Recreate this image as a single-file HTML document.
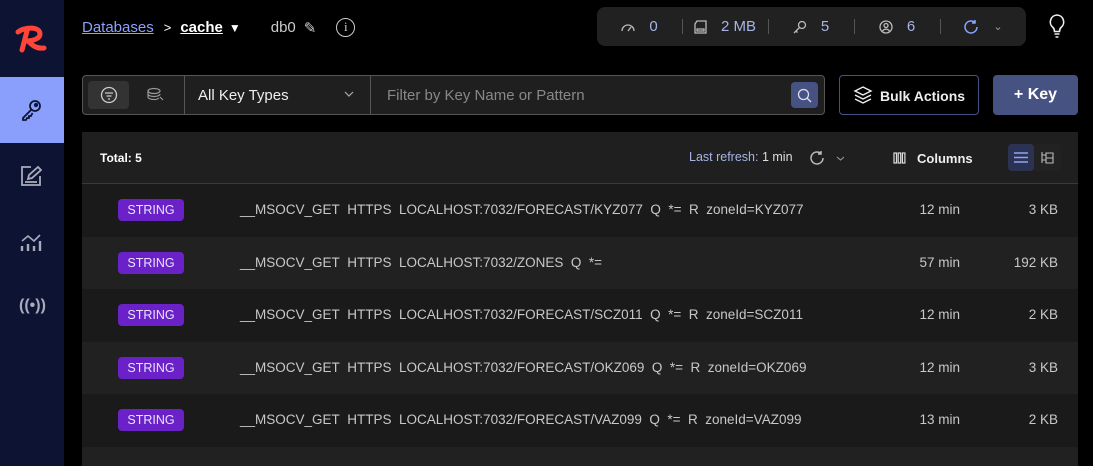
<!DOCTYPE html>
<html><head><meta charset="utf-8"><style>
*{box-sizing:border-box;margin:0;padding:0}
html,body{width:1093px;height:466px;overflow:hidden}
body{background:#000;font-family:"Liberation Sans",sans-serif;color:#ddd;position:relative}
.sb{position:absolute;left:0;top:0;width:64px;height:466px;background:#0d1433}
.act{position:absolute;left:0;top:77px;width:64px;height:66px;background:#8a9ffc}
.ab{position:absolute}
.crumb{position:absolute;top:18px;left:82px;font-size:15px;display:flex;align-items:center}
.stats{position:absolute;left:597px;top:7px;width:429px;height:39px;background:#212121;border-radius:8px;display:flex;align-items:center;font-size:15px;color:#a7b4e8}
.stats .c{display:flex;align-items:center;justify-content:center;gap:14px;height:100%;position:relative}
.stats .c+.c:before{content:"";position:absolute;left:0;top:12px;height:15px;border-left:1px solid #555}
.bar{position:absolute;left:82px;top:75px;width:743px;height:40px;border:1px solid #555;border-radius:4px;background:#1f1f1f;display:flex}
.panel{position:absolute;left:82px;top:132px;width:996px;height:334px;background:#212121;overflow:hidden}
.hdr{height:52px;border-bottom:1px solid #3a3a3a;background:#1f1f1f;position:relative;font-size:13px}
.row{height:52.5px;position:relative;font-size:13.5px;color:#c8c8c8;background:#1a1a1a}
.row:nth-child(odd){background:#212121}
.tag{position:absolute;left:36px;top:15px;width:66px;height:22px;background:#6b21c8;border-radius:4px;color:#e9e2ff;font-size:12.5px;text-align:center;line-height:22px}
.nm{position:absolute;left:158px;top:18px}
.tm{position:absolute;right:118px;top:18px}
.sz{position:absolute;right:20px;top:18px}
</style></head><body>
<div class="sb">
<svg class="ab" style="left:14px;top:24px" width="36" height="30" viewBox="0 0 36 30" fill="none" stroke="#ff4438" stroke-width="5" stroke-linecap="round" stroke-linejoin="round"><path d="M4 8c6-5 22-6 22 2 0 5-8 7-13 7M13 7L8 26M14 17c4 4 8 8 16 7"/></svg>
<div class="act"></div>
<svg class="ab" style="left:20px;top:98px" width="24" height="24" viewBox="0 0 24 24" fill="none" stroke="#0d1433" stroke-width="1.8"><circle cx="15" cy="8" r="5"/><path d="M11 12 L3 20 L3 22 L6 22 L7 20 L9 20 L9 18 L11 18 L12.5 15"/><circle cx="16" cy="7" r="1.2"/></svg>
<svg class="ab" style="left:20px;top:165px" width="22" height="22" viewBox="0 0 22 22" fill="none" stroke="#aab" stroke-width="1.8"><path d="M11 2H2v18h18V11"/><path d="M8 14l1-4 9-8 3 3-9 8z"/><path d="M5 17h12"/></svg>
<svg class="ab" style="left:20px;top:232px" width="22" height="20" viewBox="0 0 22 20" fill="none" stroke="#aab" stroke-width="2.4"><path d="M2 14v5M8 12v7M14 14v5M20 9v10"/><path d="M2 9l6-5 6 5 6-6" stroke-width="1.6"/></svg>
<div style="position:absolute;left:19px;top:297px;color:#aab;font-size:16px;font-weight:bold">((•))</div>
</div>
<div class="crumb"><span style="color:#8ba2ff;text-decoration:underline">Databases</span><span style="margin:0 9px 0 10px;color:#fff;font-size:13px">&gt;</span><span style="color:#fff;font-weight:bold;text-decoration:underline">cache</span><span style="color:#fff;margin-left:6px;font-size:12px">▼</span><span style="margin-left:30px;color:#ccc">db0</span><span style="margin-left:8px;color:#ccc">✎</span><span style="margin-left:20px;display:inline-block;width:19px;height:19px;border:1.6px solid #ccc;border-radius:50%;text-align:center;font-size:13px;line-height:16px;color:#ccc;font-family:'Liberation Serif'">i</span></div>
<div class="stats">
<div class="c" style="width:85px"><svg width="14" height="10" viewBox="0 0 14 10" fill="none" stroke="#bbb" stroke-width="1.3"><path d="M1 9a6 6 0 0 1 12 0M7 9l3-4"/></svg><span>0</span></div>
<div class="c" style="width:86px"><svg width="13" height="14" viewBox="0 0 13 14" fill="none" stroke="#bbb" stroke-width="1.3"><path d="M3 1h9v12H1V4z M3 9h7v2H3z"/></svg><span>2 MB</span></div>
<div class="c" style="width:86px"><svg width="14" height="14" viewBox="0 0 14 14" fill="none" stroke="#bbb" stroke-width="1.3"><circle cx="9" cy="5" r="3.5"/><path d="M6.5 7.5L1 13M3 11l1.5 1.5"/></svg><span>5</span></div>
<div class="c" style="width:86px"><svg width="14" height="14" viewBox="0 0 14 14" fill="none" stroke="#bbb" stroke-width="1.3"><circle cx="7" cy="7" r="6"/><circle cx="7" cy="5.5" r="2"/><path d="M3.5 11c2-2.5 5-2.5 7 0"/></svg><span>6</span></div>
<div class="c" style="width:86px"><svg width="16" height="16" viewBox="0 0 16 16" fill="none" stroke="#8ba2ff" stroke-width="1.5"><path d="M14 8a6 6 0 1 1-2-4.5M12 1v3h-3"/></svg><span style="color:#999;font-size:11px">⌄</span></div>
</div>
<svg class="ab" style="left:1047px;top:13px" width="20" height="26" viewBox="0 0 20 26" fill="none" stroke="#eee" stroke-width="1.6"><path d="M10 2a7 7 0 0 0-4 12.5c1 1 1.5 2.5 1.5 4h5c0-1.5.5-3 1.5-4A7 7 0 0 0 10 2z M7.5 21h5M8.5 24h3"/></svg>
<div class="bar">
<div style="width:102px;border-right:1px solid #555;position:relative"><div style="position:absolute;left:5px;top:5px;width:41px;height:28px;background:#333;border-radius:4px"></div><svg class="ab" style="left:17px;top:10px" width="18" height="18" viewBox="0 0 18 18" fill="none" stroke="#ccc" stroke-width="1.3"><circle cx="9" cy="9" r="7.5"/><path d="M5 7h8M6.5 10h5M8 13h2"/></svg><svg class="ab" style="left:63px;top:11px" width="18" height="16" viewBox="0 0 18 16" fill="none" stroke="#999" stroke-width="1.2"><ellipse cx="8" cy="4" rx="6" ry="2.5"/><path d="M2 4v3c0 1.5 3 2.5 6 2.5s6-1 6-2.5M2 7v3c0 1.5 3 2.5 6 2.5 2 0 4-.5 5-1.5M14 10l3 3"/></svg></div>
<div style="width:186px;border-right:1px solid #555;color:#eee;font-size:15px;padding:11px 0 0 13px;position:relative">All Key Types<svg class="ab" style="right:16px;top:15px" width="10" height="6" viewBox="0 0 10 6" fill="none" stroke="#aaa" stroke-width="1.2"><path d="M1 1l4 4 4-4"/></svg></div>
<div style="flex:1;color:#888;font-size:15px;padding:11px 0 0 16px;position:relative">Filter by Key Name or Pattern<div style="position:absolute;right:6px;top:6px;width:27px;height:26px;background:#465282;border-radius:4px"><svg style="margin:6px" width="15" height="15" viewBox="0 0 15 15" fill="none" stroke="#dde" stroke-width="1.3"><circle cx="6.5" cy="6.5" r="5"/><path d="M10 10l4 4"/></svg></div></div>
</div>
<div style="position:absolute;left:839px;top:75px;width:140px;height:40px;border:1px solid #465282;border-radius:4px;color:#eee;font-weight:bold;font-size:14px;padding:12px 0 0 40px">Bulk Actions<svg class="ab" style="left:13px;top:9px" width="20" height="20" viewBox="0 0 20 20" fill="none" stroke="#eee" stroke-width="1.4"><path d="M10 2l8 4-8 4-8-4z M2 10l8 4 8-4 M2 14l8 4 8-4"/></svg></div>
<div style="position:absolute;left:993px;top:75px;width:85px;height:40px;background:#465282;border-radius:4px;color:#fff;font-weight:bold;font-size:16px;text-align:center;line-height:40px">+ Key</div>
<div class="panel">
<div class="hdr">
<span style="position:absolute;left:18px;top:19px;color:#fff;font-weight:bold;font-size:12px">Total: 5</span>
<span style="position:absolute;left:607px;top:18px;color:#a7b4e8;font-size:12.5px">Last refresh: <span style="color:#ddd">1 min</span></span>
<svg class="ab" style="left:727px;top:18px" width="16" height="16" viewBox="0 0 16 16" fill="none" stroke="#bbb" stroke-width="1.5"><path d="M14 8a6 6 0 1 1-2-4.5M12 1v3h-3"/></svg>
<svg class="ab" style="left:754px;top:24px" width="9" height="5" viewBox="0 0 9 5" fill="none" stroke="#999" stroke-width="1.1"><path d="M1 1l3.5 3 3.5-3"/></svg>
<svg class="ab" style="left:811px;top:20px" width="13" height="12" viewBox="0 0 13 12" fill="none" stroke="#ddd" stroke-width="1.2"><rect x="1" y="1" width="2.5" height="10"/><rect x="5.2" y="1" width="2.5" height="10"/><rect x="9.4" y="1" width="2.5" height="10"/></svg>
<span style="position:absolute;left:835px;top:19px;color:#eee;font-weight:bold">Columns</span>
<div style="position:absolute;left:926px;top:12px;width:53px;height:27px;background:#222;border-radius:4px"><div style="width:26px;height:27px;background:#2c3252;border-radius:4px"><svg style="margin:8px 6px" width="14" height="11" viewBox="0 0 14 11" stroke="#8ba2ff" stroke-width="1.5"><path d="M0 1h14M0 5.5h14M0 10h14"/></svg></div><svg class="ab" style="left:33px;top:7px" width="13" height="13" viewBox="0 0 13 13" fill="none" stroke="#bbb" stroke-width="1.1"><path d="M1 1v11M1 4h4M1 9h4M5 2h7v5H5zM5 7h7v5H5z"/></svg></div>
</div>
<div class="row"><div class="tag">STRING</div><div class="nm">__MSOCV_GET&nbsp; HTTPS&nbsp; LOCALHOST:7032/FORECAST/KYZ077&nbsp; Q&nbsp; *=&nbsp; R&nbsp; zoneId=KYZ077</div><div class="tm">12 min</div><div class="sz">3 KB</div></div>
<div class="row"><div class="tag">STRING</div><div class="nm">__MSOCV_GET&nbsp; HTTPS&nbsp; LOCALHOST:7032/ZONES&nbsp; Q&nbsp; *=</div><div class="tm">57 min</div><div class="sz">192 KB</div></div>
<div class="row"><div class="tag">STRING</div><div class="nm">__MSOCV_GET&nbsp; HTTPS&nbsp; LOCALHOST:7032/FORECAST/SCZ011&nbsp; Q&nbsp; *=&nbsp; R&nbsp; zoneId=SCZ011</div><div class="tm">12 min</div><div class="sz">2 KB</div></div>
<div class="row"><div class="tag">STRING</div><div class="nm">__MSOCV_GET&nbsp; HTTPS&nbsp; LOCALHOST:7032/FORECAST/OKZ069&nbsp; Q&nbsp; *=&nbsp; R&nbsp; zoneId=OKZ069</div><div class="tm">12 min</div><div class="sz">3 KB</div></div>
<div class="row"><div class="tag">STRING</div><div class="nm">__MSOCV_GET&nbsp; HTTPS&nbsp; LOCALHOST:7032/FORECAST/VAZ099&nbsp; Q&nbsp; *=&nbsp; R&nbsp; zoneId=VAZ099</div><div class="tm">13 min</div><div class="sz">2 KB</div></div>
</div>
</body></html>
